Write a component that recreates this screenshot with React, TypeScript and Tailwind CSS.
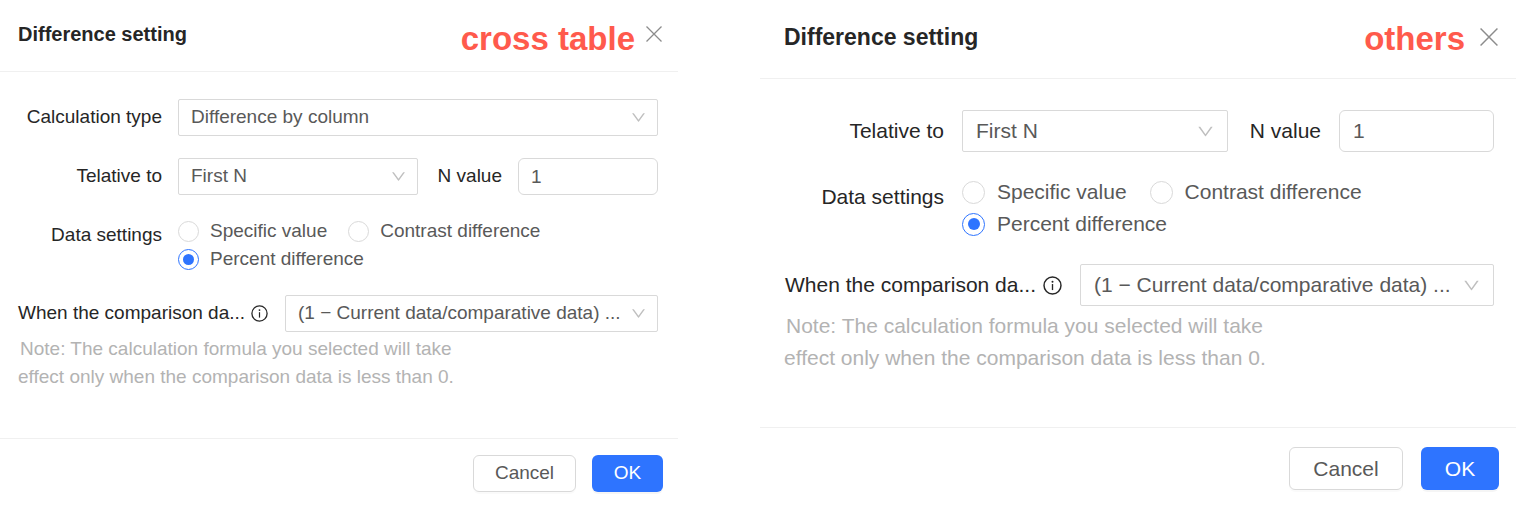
import { ReactNode, SelectHTMLAttributes, useId, useState } from "react";
import clsx from "clsx";
import { AiOutlineDown } from "react-icons/ai";

type Size = "md" | "lg";

type SizeProps = {
  size: Size;
};

const DATA_SETTINGS = [
  "Specific value",
  "Contrast difference",
  "Percent difference",
];

/**
 * Class names for the two sizes of the dialog
 */
const styles = {
  md: {
    root: "text-[19px]",
    header: "h-[72px] pl-[18px] pr-4 pb-1",
    title: "text-[20px]",
    tag: "mr-[11px] pt-2.5",
    close: "size-4",
    body: "gap-[22px] pt-[27px] pb-[47px] pr-5",
    row: "gap-4",
    label: "w-[162px] h-[37px]",
    control: "h-[37px] px-3",
    arrow: "right-[11px] size-[17px]",
    nLabel: "pl-5 pr-4",
    nValue: "w-[140px]",
    radios: "gap-x-[21px]",
    option: "gap-[11px] h-7",
    radio: "size-[21px] before:size-[11px]",
    formula: "pl-[18px]",
    formulaLabel: "w-[250px] mr-[17px]",
    info: "size-[17px]",
    note: "mt-[3px] pl-[18px] leading-7",
    footer: "gap-4 pt-4 pb-[18px] pr-[15px]",
    cancel: "h-[37px] w-[103px]",
    ok: "h-[37px] w-[71px]",
  },
  lg: {
    root: "text-[21px]",
    header: "h-[79px] pl-[24px] pr-[18px] pb-1",
    title: "text-[23px]",
    tag: "mr-[15px] pt-1",
    close: "size-[18px]",
    body: "gap-6 pt-[31px] pb-[53px] pr-[22px]",
    row: "gap-[18px]",
    label: "w-[184px] h-[42px]",
    control: "h-[42px] px-[13px]",
    arrow: "right-[13px] size-[19px]",
    nLabel: "pl-[22px] pr-[18px]",
    nValue: "w-[155px]",
    radios: "gap-x-[23px]",
    option: "gap-3 h-8",
    radio: "size-[23px] before:size-[12px]",
    formula: "pl-[25px]",
    formulaLabel: "w-[277px] mr-[18px]",
    info: "size-[19px]",
    note: "mt-1 pl-[24px] leading-8",
    footer: "gap-[18px] pt-[19px] pb-5 pr-[17px]",
    cancel: "h-[43px] w-[114px]",
    ok: "h-[43px] w-[78px]",
  },
};

export default function App() {
  return (
    <main className="grid grid-cols-[678fr_756fr] items-start gap-[82px] bg-white pr-1.5 font-['Liberation_Sans',Arial,sans-serif]">
      <DifferenceDialog size="md" tag="cross table" byColumn />
      <DifferenceDialog size="lg" tag="others" />
    </main>
  );
}

/**
 * Difference setting dialog. Cross tables can also pick the calculation type.
 */
function DifferenceDialog(
  { size, tag, byColumn }: SizeProps & { tag: string; byColumn?: boolean },
) {
  const s = styles[size];
  const id = useId();
  const [nValue, setNValue] = useState("1");

  return (
    <section
      role="dialog"
      aria-labelledby={`${id}-title`}
      className={clsx("min-w-0 text-[#262626]", s.root)}
    >
      <header
        className={clsx("flex items-center border-b border-[#f0f0f0]", s.header)}
      >
        <h2 id={`${id}-title`} className={clsx("font-bold", s.title)}>
          Difference setting
        </h2>
        <span
          className={clsx(
            "ml-auto text-[33px] leading-10 font-bold text-[#ff5a4c]",
            s.tag,
          )}
        >
          {tag}
        </span>
        <button type="button" aria-label="Close" className="text-[#8c8c8c]">
          <CloseIcon className={s.close} />
        </button>
      </header>

      <div className={clsx("flex flex-col", s.body)}>
        {byColumn && (
          <div className={clsx("flex items-center", s.row)}>
            <Label size={size} htmlFor={`${id}-type`}>Calculation type</Label>
            <Select size={size} id={`${id}-type`}>
              <option>Difference by column</option>
            </Select>
          </div>
        )}

        <div className={clsx("flex items-center", s.row)}>
          <Label size={size} htmlFor={`${id}-relative`}>Telative to</Label>
          <div className="flex min-w-0 flex-1 items-center">
            <Select size={size} id={`${id}-relative`}>
              <option>First N</option>
            </Select>
            <label
              htmlFor={`${id}-n`}
              className={clsx("whitespace-nowrap", s.nLabel)}
            >
              N value
            </label>
            <input
              id={`${id}-n`}
              value={nValue}
              onChange={(e) => setNValue(e.target.value)}
              className={clsx(
                "shrink-0 rounded-md border border-[#d9d9d9] text-[#595959]",
                s.control,
                s.nValue,
              )}
            />
          </div>
        </div>

        <DataSettings size={size} />

        <div>
          <div className={clsx("flex items-center", s.formula)}>
            <label
              htmlFor={`${id}-formula`}
              className={clsx(
                "flex shrink-0 items-center justify-between whitespace-nowrap",
                s.formulaLabel,
              )}
            >
              When the comparison da...
              <InfoIcon className={s.info} />
            </label>
            <Select size={size} id={`${id}-formula`}>
              <option>(1 − Current data/comparative data) ...</option>
            </Select>
          </div>
          <p className={clsx("indent-0.5 text-[#b3b3b3]", s.note)}>
            Note: The calculation formula you selected will take
            <br />
            effect only when the comparison data is less than 0.
          </p>
        </div>
      </div>

      <footer
        className={clsx("flex justify-end border-t border-[#f0f0f0]", s.footer)}
      >
        <button
          type="button"
          className={clsx(
            "rounded-md border border-[#d9d9d9] text-[#595959] shadow-[0_2px_0_rgba(0,0,0,0.02)]",
            s.cancel,
          )}
        >
          Cancel
        </button>
        <button
          type="button"
          className={clsx(
            "rounded-md bg-[#2e74ff] text-white shadow-[0_2px_0_rgba(0,0,0,0.04)]",
            s.ok,
          )}
        >
          OK
        </button>
      </footer>
    </section>
  );
}

/**
 * Radio group for how the difference is shown
 */
function DataSettings({ size }: SizeProps) {
  const s = styles[size];
  const id = useId();
  const [selected, setSelected] = useState("Percent difference");

  return (
    <div
      role="radiogroup"
      aria-labelledby={id}
      className={clsx("flex items-start", s.row)}
    >
      <span
        id={id}
        className={clsx("flex shrink-0 items-center justify-end", s.label)}
      >
        Data settings
      </span>
      <div className={clsx("flex min-w-0 flex-1 flex-wrap", s.radios)}>
        {DATA_SETTINGS.map((option) => (
          <label
            key={option}
            className={clsx("flex items-center text-[#595959]", s.option)}
          >
            <input
              type="radio"
              name={id}
              checked={selected === option}
              onChange={() => setSelected(option)}
              className={clsx(
                "grid appearance-none place-content-center rounded-full border border-[#d9d9d9] before:rounded-full checked:border-[#2e74ff] checked:before:bg-[#2e74ff]",
                s.radio,
              )}
            />
            {option}
          </label>
        ))}
      </div>
    </div>
  );
}

/**
 * Right aligned label in the first column
 */
function Label(
  { size, htmlFor, children }: SizeProps & {
    htmlFor: string;
    children: ReactNode;
  },
) {
  return (
    <label
      htmlFor={htmlFor}
      className={clsx(
        "flex shrink-0 items-center justify-end",
        styles[size].label,
      )}
    >
      {children}
    </label>
  );
}

/**
 * Native select with its own arrow
 */
function Select(
  { size, ...props }:
    & SizeProps
    & Omit<SelectHTMLAttributes<HTMLSelectElement>, "size">,
) {
  const s = styles[size];

  return (
    <div className="relative flex min-w-0 flex-1 items-center">
      <select
        {...props}
        className={clsx(
          "w-full appearance-none rounded-xs border border-[#d9d9d9] bg-white text-[#595959]",
          s.control,
        )}
      />
      <AiOutlineDown
        className={clsx("pointer-events-none absolute text-[#bfbfbf]", s.arrow)}
      />
    </div>
  );
}

function CloseIcon({ className }: { className?: string }) {
  return (
    <svg
      viewBox="0 0 16 16"
      fill="none"
      stroke="currentColor"
      strokeWidth="1.3"
      className={className}
    >
      <path d="M0.5 0.5 15.5 15.5M15.5 0.5 0.5 15.5" />
    </svg>
  );
}

function InfoIcon({ className }: { className?: string }) {
  return (
    <svg
      viewBox="0 0 17 17"
      fill="none"
      stroke="currentColor"
      strokeWidth="1.3"
      className={className}
    >
      <circle cx="8.5" cy="8.5" r="7.6" />
      <path d="M8.5 7.2V12.6" strokeWidth="1.2" />
      <circle cx="8.5" cy="5.1" r="0.9" fill="currentColor" stroke="none" />
    </svg>
  );
}
